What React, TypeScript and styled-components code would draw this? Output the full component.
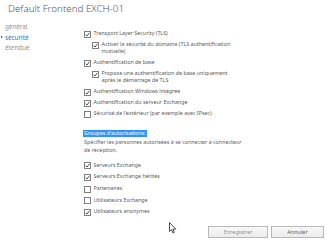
import React from "react";
import styled, { createGlobalStyle } from "styled-components";

const GlobalStyle = createGlobalStyle`
  html, body {
    margin: 0;
    padding: 0;
    background: #ffffff;
  }
  body {
    font-family: "Noto Sans", "Open Sans", sans-serif;
  }
`;

const Page = styled.div`
  position: relative;
  width: 327px;
  height: 243px;
  overflow: hidden;
  background: #fff;
`;

const Title = styled.h1`
  margin: 0;
  padding: 3px 0 0 8px;
  font-size: 9.8px;
  font-weight: 300;
  line-height: 12px;
  color: #555;
`;

const Body = styled.div`
  display: flex;
`;

const Nav = styled.ul`
  list-style: none;
  margin: 0;
  padding: 8px 0 0 5px;
  width: 84px;
  box-sizing: border-box;
  display: flex;
  flex-direction: column;
  gap: 3.2px;
`;

const NavItem = styled.li<{ $active?: boolean }>`
  position: relative;
  font-size: 6.3px;
  line-height: 7.5px;
  color: ${(p) => (p.$active ? "#2a78c8" : "#949494")};
  &::before {
    content: ${(p) => (p.$active ? '""' : "none")};
    position: absolute;
    left: -4px;
    top: 2.6px;
    border-left: 2.5px solid #333;
    border-top: 1.5px solid transparent;
    border-bottom: 1.5px solid transparent;
  }
`;

const Content = styled.div`
  flex: 1;
  padding-top: 15px;
  display: flex;
  flex-direction: column;
  font-size: 5.35px;
  color: #5a5a5a;
`;

const Options = styled.div`
  display: flex;
  flex-direction: column;
  gap: 3.45px;
`;

const Row = styled.label<{ $indent?: boolean }>`
  display: flex;
  align-items: flex-start;
  gap: 2.5px;
  margin-left: ${(p) => (p.$indent ? "8px" : "0")};
  line-height: 7.3px;
`;

const Box = styled.span`
  flex: none;
  width: 5px;
  height: 5px;
  margin-top: 0.6px;
  border: 0.8px solid #808080;
  background: #fff;
  display: flex;
  align-items: center;
  justify-content: center;
`;

const Section = styled.div`
  margin-top: 12px;
  display: flex;
  flex-direction: column;
  line-height: 7.6px;
`;

const Heading = styled.span`
  align-self: flex-start;
  background: #3391ff;
  color: #fff;
  padding: 0 1px;
  margin: 0 0 2px -1px;
`;

const Hint = styled.p`
  margin: 0;
  color: #606060;
`;

const Groups = styled(Options)`
  margin-top: 7px;
  gap: 4.1px;
`;

const Footer = styled.div`
  display: flex;
  justify-content: flex-end;
  gap: 3px;
  margin-top: 10px;
  padding-right: 3px;
`;

const Button = styled.button<{ $w: number; $muted?: boolean }>`
  width: ${(p) => p.$w}px;
  height: 12px;
  padding: 0;
  border: 1px solid #b8b8b8;
  background: linear-gradient(#f8f8f8, #ececec);
  font-family: inherit;
  font-size: 5.5px;
  color: ${(p) => (p.$muted ? "#959595" : "#5a5a5a")};
`;

const Cursor = styled.svg`
  position: absolute;
  left: 169px;
  top: 222px;
`;

const Check = () => (
  <svg width="5" height="5" viewBox="0 0 10 10">
    <path d="M1.5 5.2 L4 8 L9 1.5" fill="none" stroke="#333" strokeWidth="1.7" />
  </svg>
);

const Option = ({
  checked,
  indent,
  children,
}: {
  checked?: boolean;
  indent?: boolean;
  children: React.ReactNode;
}) => (
  <Row $indent={indent}>
    <Box>{checked && <Check />}</Box>
    <span>{children}</span>
  </Row>
);

export default function App() {
  return (
    <Page>
      <GlobalStyle />
      <Title>Default Frontend EXCH-01</Title>
      <Body>
        <Nav>
          <NavItem>général</NavItem>
          <NavItem $active>sécurité</NavItem>
          <NavItem>étendue</NavItem>
        </Nav>
        <Content>
          <Options>
            <Option checked>Transport Layer Security (TLS)</Option>
            <Option checked indent>
              Activer la sécurité du domaine (TLS authentification
              <br />
              mutuelle)
            </Option>
            <Option checked>Authentification de base</Option>
            <Option checked indent>
              Propose une authentification de base uniquement
              <br />
              après le démarrage de TLS
            </Option>
            <Option checked>Authentification Windows intégrée</Option>
            <Option checked>Authentification du serveur Exchange</Option>
            <Option>Sécurisé de l'extérieur (par exemple avec IPsec)</Option>
          </Options>
          <Section>
            <Heading>Groupes d'autorisations:</Heading>
            <Hint>
              Spécifier les personnes autorisées à se connecter à connecteur
              <br />
              de réception.
            </Hint>
          </Section>
          <Groups>
            <Option checked>Serveurs Exchange</Option>
            <Option checked>Serveurs Exchange hérités</Option>
            <Option>Partenaires</Option>
            <Option>Utilisateurs Exchange</Option>
            <Option checked>Utilisateurs anonymes</Option>
          </Groups>
          <Footer>
            <Button $w={60} $muted>
              Enregistrer
            </Button>
            <Button $w={53}>Annuler</Button>
          </Footer>
        </Content>
      </Body>
      <Cursor width="8" height="12" viewBox="0 0 8 12">
        <path d="M0.5 0.5 L0.5 9.5 L2.6 7.6 L4 11 L5.3 10.4 L3.9 7.2 L6.8 7.2 Z" fill="#fff" stroke="#222" strokeWidth="0.8" />
      </Cursor>
    </Page>
  );
}
